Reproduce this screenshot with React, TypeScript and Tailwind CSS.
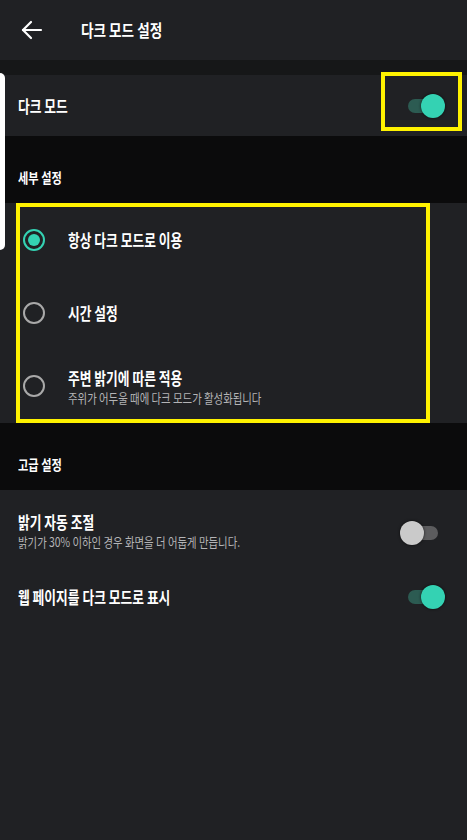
const KR = "font-['Noto_Sans_CJK_KR','Noto_Sans',sans-serif]";

function Toggle({ on }: { on: boolean }) {
  return (
    <div className="relative w-[45px] h-[24px] shrink-0">
      <div
        className={`absolute left-[8px] top-[5px] w-[30px] h-[14px] rounded-full ${
          on ? 'bg-[#2c5b52]' : 'bg-[#5c5c5e]'
        }`}
      />
      <div
        className={`absolute top-0 w-[24px] h-[24px] rounded-full shadow-[0_0_3px_rgba(0,0,0,0.7)] ${
          on ? 'right-0 bg-[#34d2b3]' : 'left-0 bg-[#cacaca]'
        }`}
      />
    </div>
  );
}

function Radio({ checked }: { checked: boolean }) {
  return (
    <div
      className={`w-[22px] h-[22px] rounded-full border-[2.5px] flex items-center justify-center shrink-0 ${
        checked ? 'border-[#34d2b3]' : 'border-[#a9a9a9]'
      }`}
    >
      {checked && <div className="w-[12px] h-[12px] rounded-full bg-[#34d2b3]" />}
    </div>
  );
}

function Title({ children }: { children: React.ReactNode }) {
  return (
    <span className="block text-[17px] leading-[22px] font-bold text-white whitespace-nowrap scale-x-[0.75] origin-left">
      {children}
    </span>
  );
}

function Sub({ children }: { children: React.ReactNode }) {
  return (
    <span className="block text-[13px] leading-[18px] text-[#b4b4b6] whitespace-nowrap scale-x-[0.8] origin-left">
      {children}
    </span>
  );
}

function SectionHeader({ label }: { label: string }) {
  return (
    <div className="h-[67px] bg-[#0b0b0c] flex items-end px-[18px] pb-[17px]">
      <span className="block text-[14px] leading-[18px] font-bold text-white whitespace-nowrap scale-x-[0.8] origin-left">
        {label}
      </span>
    </div>
  );
}

export default function App() {
  const options = [
    { label: '항상 다크 모드로 이용', checked: true },
    { label: '시간 설정', checked: false },
    { label: '주변 밝기에 따른 적용', sub: '주위가 어두울 때에 다크 모드가 활성화됩니다', checked: false },
  ];

  return (
    <div className={`relative w-[467px] h-[840px] bg-[#202124] overflow-hidden ${KR}`}>
      {/* header */}
      <div className="h-[60px] flex items-center">
        <svg className="ml-[21px]" width="22" height="20" viewBox="0 0 22 20" fill="none" stroke="white" strokeWidth="2.2" strokeLinecap="round" strokeLinejoin="round">
          <path d="M2 10h18" />
          <path d="M10 2 2 10l8 8" />
        </svg>
        <span className="ml-[38px] block text-[17px] leading-[22px] font-bold text-white whitespace-nowrap scale-x-[0.8] origin-left">
          다크 모드 설정
        </span>
      </div>
      <div className="h-[15px] bg-[#161718]" />

      {/* dark mode row */}
      <div className="relative h-[61px] flex items-center justify-between pl-[18px] pr-[22px]">
        <Title>다크 모드</Title>
        <div className="mt-[1px]">
          <Toggle on />
        </div>
        <div className="absolute left-[381px] top-[-3px] w-[81px] h-[59px] border-[4px] border-[#fff200]" />
      </div>

      <SectionHeader label="세부 설정" />

      {/* options */}
      <div className="relative h-[220px]">
        {options.map((o) => (
          <div key={o.label} className="h-[73px] flex items-center pl-[23px]">
            <Radio checked={o.checked} />
            <div className={`ml-[23px] ${o.sub ? 'mt-[3px]' : ''}`}>
              <Title>{o.label}</Title>
              {o.sub && <Sub>{o.sub}</Sub>}
            </div>
          </div>
        ))}
        <div className="absolute left-[16px] top-0 w-[414px] h-[220px] border-[4px] border-[#fff200]" />
      </div>

      <SectionHeader label="고급 설정" />

      {/* advanced */}
      <div className="h-[78px] flex items-center justify-between pl-[18px] pr-[22px] pt-[4px]">
        <div>
          <Title>밝기 자동 조절</Title>
          <Sub>밝기가 30% 이하인 경우 화면을 더 어둡게 만듭니다.</Sub>
        </div>
        <div className="mt-[4px]">
          <Toggle on={false} />
        </div>
      </div>
      <div className="h-[58px] flex items-center justify-between pl-[18px] pr-[22px]">
        <Title>웹 페이지를 다크 모드로 표시</Title>
        <Toggle on />
      </div>

      {/* white window edge */}
      <div className="absolute left-0 top-[73px] w-[5px] h-[177px] bg-white rounded-r-[5px]" />
    </div>
  );
}
